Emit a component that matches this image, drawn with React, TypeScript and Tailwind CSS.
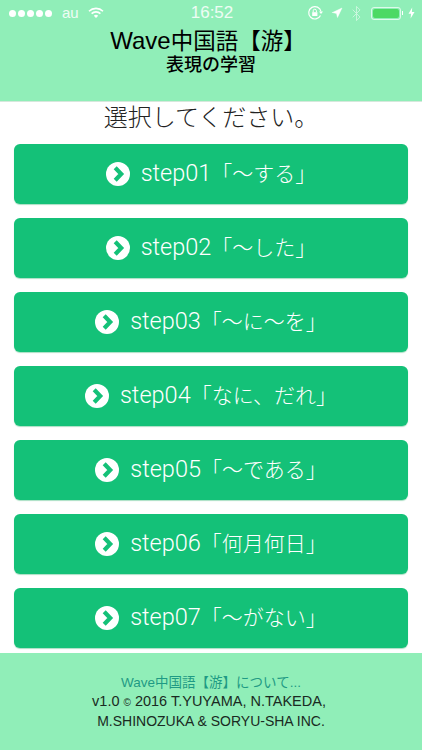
import { Navigation, Bluetooth } from 'lucide-react';

const steps = [
  ['step01', '「〜する」'],
  ['step02', '「〜した」'],
  ['step03', '「〜に〜を」'],
  ['step04', '「なに、だれ」'],
  ['step05', '「〜である」'],
  ['step06', '「何月何日」'],
  ['step07', '「〜がない」'],
];

function ChevronCircle() {
  return (
    <svg width="24" height="24" viewBox="0 0 24 24" className="shrink-0">
      <circle cx="12" cy="12" r="12" fill="#ffffff" />
      <path d="M9.2 5.8 L15.2 12 L9.2 18.2" fill="none" stroke="#14c178" strokeWidth="4.2" />
    </svg>
  );
}

function StatusBar() {
  return (
    <div
      className="flex h-[26px] items-center justify-between pl-[9px] pr-[7px] text-white/85"
      style={{ fontFamily: '"Liberation Sans", sans-serif' }}
    >
      <div className="flex w-[130px] items-center">
        <div className="flex gap-[2px]">
          {[0, 1, 2, 3, 4].map((i) => (
            <span key={i} className="h-[7px] w-[7px] rounded-full bg-white" />
          ))}
        </div>
        <span className="ml-[10px] text-[15px]">au</span>
        <svg width="16" height="12" viewBox="0 0 16 12" className="ml-[9px]">
          <path d="M1 4.2 A10 10 0 0 1 15 4.2" fill="none" stroke="#fff" strokeWidth="1.6" />
          <path d="M3.6 6.6 A6.4 6.4 0 0 1 12.4 6.6" fill="none" stroke="#fff" strokeWidth="1.6" />
          <path d="M5.8 8.8 A3.2 3.2 0 0 1 10.2 8.8 L8 11 Z" fill="#fff" />
        </svg>
      </div>
      <span className="text-[17px]">16:52</span>
      <div className="flex w-[130px] items-center justify-end">
        <svg width="16" height="16" viewBox="0 0 16 16">
          <path d="M13.5 10.5 A6.2 6.2 0 1 1 14 6.5" fill="none" stroke="#fff" strokeWidth="1.2" />
          <path d="M12 6.5 H16 L14 9 Z" fill="#fff" />
          <rect x="5.2" y="7.2" width="5.2" height="3.8" fill="#fff" />
          <path d="M6.2 7.2 V5.8 A1.6 1.6 0 0 1 9.4 5.8 V7.2" fill="none" stroke="#fff" strokeWidth="1" />
        </svg>
        <Navigation size={12} fill="#fff" strokeWidth={1} className="ml-[8px]" />
        <Bluetooth size={17} strokeWidth={1.4} className="ml-[5px] opacity-60" />
        <div className="ml-[6px] h-[13px] w-[30px] rounded-[3px] border border-white/70 p-[1px]">
          <div className="h-full w-full rounded-[2px] bg-[#4cd964]" />
        </div>
        <span className="ml-[1px] h-[4px] w-[1px] bg-white" />
        <svg width="7" height="12" viewBox="0 0 7 11" className="ml-[5px]">
          <path d="M4.2 0 L0.5 6.2 H3 L2.6 11 L6.5 4.4 H3.9 Z" fill="#fff" />
        </svg>
      </div>
    </div>
  );
}

export default function App() {
  return (
    <div
      className="flex h-[750px] w-full flex-col overflow-hidden bg-white"
      style={{ fontFamily: '"Liberation Sans", "Noto Sans CJK JP", sans-serif' }}
    >
      <div className="h-[102px] border-b border-[#d5e8dc] bg-[#90eeb8]">
        <StatusBar />
        <div className="mt-[3px] flex flex-col items-center text-black">
          <div className="pr-[6px] text-[22.5px] leading-[24px]">
            <span className="text-[24px]">Wave</span>中国語【游】
          </div>
          <div
            className="text-[18px] leading-[22px] font-medium"
            style={{ fontFamily: 'Roboto, "Noto Sans CJK JP", sans-serif' }}
          >
            表現の学習
          </div>
        </div>
      </div>

      <div className="text-center text-[24px] leading-[32px] font-light text-[#222]">選択してください。</div>

      <div className="flex flex-1 flex-col gap-[14px] px-[14px] pt-[10px]">
        {steps.map(([label, jp]) => (
          <div
            key={label}
            className="flex h-[60px] items-center justify-center gap-[11px] rounded-[6px] bg-[#14c178] font-light text-white shadow-[0_1px_1px_#a9dfc4]"
            style={{ fontFamily: 'Roboto, "Noto Sans CJK JP", sans-serif' }}
          >
            <ChevronCircle />
            <span className="text-[21px]">
              <span className="text-[23.5px]">{label}</span>
              {jp}
            </span>
          </div>
        ))}
      </div>

      <div className="flex h-[97px] flex-col items-center bg-[#90eeb8] pt-[20px] text-[14px] leading-[19px] text-[#1a2a22]">
        <div className="text-[13.5px] text-[#1f9a84]">Wave中国語【游】について...</div>
        <div className="pr-[4px] text-[14.5px]">
          v1.0 <span className="text-[10px]">©</span> 2016 T.YUYAMA, N.TAKEDA,
        </div>
        <div>M.SHINOZUKA &amp; SORYU-SHA INC.</div>
      </div>
    </div>
  );
}
